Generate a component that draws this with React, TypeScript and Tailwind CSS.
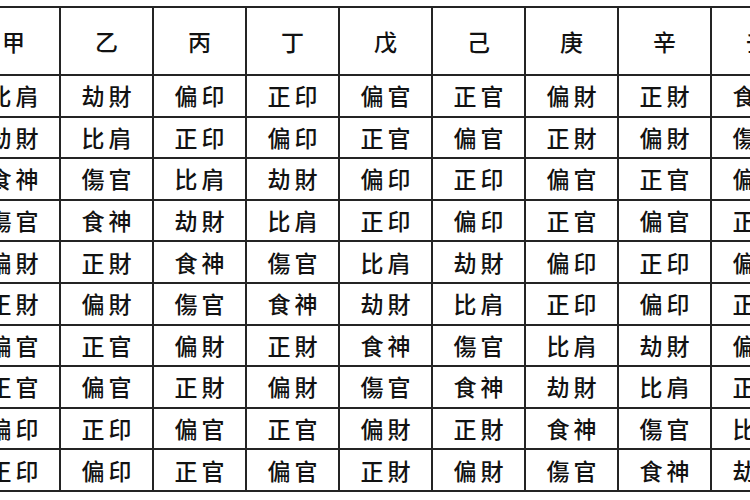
const stems = ['甲', '乙', '丙', '丁', '戊', '己', '庚', '辛', '壬', '癸']

// one row per stem, one column per day stem
const rows = [
    ['比肩', '劫財', '偏印', '正印', '偏官', '正官', '偏財', '正財', '食神', '傷官'],
    ['劫財', '比肩', '正印', '偏印', '正官', '偏官', '正財', '偏財', '傷官', '食神'],
    ['食神', '傷官', '比肩', '劫財', '偏印', '正印', '偏官', '正官', '偏財', '正財'],
    ['傷官', '食神', '劫財', '比肩', '正印', '偏印', '正官', '偏官', '正財', '偏財'],
    ['偏財', '正財', '食神', '傷官', '比肩', '劫財', '偏印', '正印', '偏官', '正官'],
    ['正財', '偏財', '傷官', '食神', '劫財', '比肩', '正印', '偏印', '正官', '偏官'],
    ['偏官', '正官', '偏財', '正財', '食神', '傷官', '比肩', '劫財', '偏印', '正印'],
    ['正官', '偏官', '正財', '偏財', '傷官', '食神', '劫財', '比肩', '正印', '偏印'],
    ['偏印', '正印', '偏官', '正官', '偏財', '正財', '食神', '傷官', '比肩', '劫財'],
    ['正印', '偏印', '正官', '偏官', '正財', '偏財', '傷官', '食神', '劫財', '比肩'],
]

export default function App() {
    return (
        <div
            className="w-[750px] h-[500px] overflow-hidden bg-white pt-[6px] text-[#121212] font-medium"
            style={{ fontFamily: '"Noto Sans CJK SC", "Noto Sans CJK TC", sans-serif' }}
        >
            <div className="ml-[-34px] w-max grid grid-cols-[repeat(10,93px)] border-t-2 border-l-2 border-[#242424]">
                {/* Header */}
                {stems.map((s) => (
                    <div
                        key={s}
                        className="h-[68px] flex items-center justify-center border-r-2 border-b-2 border-[#242424] text-[23px]"
                    >
                        {s}
                    </div>
                ))}

                {/* Body */}
                {rows.map((row, i) =>
                    row.map((cell, j) => (
                        <div
                            key={`${i}-${j}`}
                            className="h-[41.6px] flex items-center justify-center border-r-2 border-b-2 border-[#242424] text-[23px] leading-none tracking-[4px] pl-[4px]"
                        >
                            {cell}
                        </div>
                    ))
                )}
            </div>
        </div>
    )
}
